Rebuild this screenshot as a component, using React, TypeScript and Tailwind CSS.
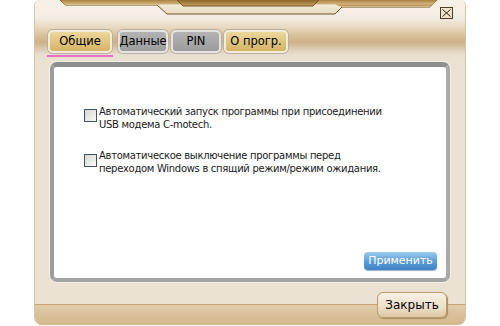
import React from "react";

function Header() {
  return (
    <svg width="430" height="15" viewBox="0 0 430 15" className="block shrink-0">
      <defs>
        <linearGradient id="lightG" x1="0" y1="0" x2="0" y2="1">
          <stop offset="0" stopColor="#f6efe3" />
          <stop offset="1" stopColor="#e9dcc4" />
        </linearGradient>
        <linearGradient id="goldG" x1="0" y1="0" x2="0" y2="1">
          <stop offset="0" stopColor="#a9813f" />
          <stop offset="1" stopColor="#dcc08a" />
        </linearGradient>
        <linearGradient id="darkG" x1="0" y1="0" x2="0" y2="1">
          <stop offset="0" stopColor="#8c6428" />
          <stop offset="1" stopColor="#c9a264" />
        </linearGradient>
      </defs>
      <rect x="0" y="0" width="430" height="15" fill="#f5efe6" />
      <polygon
        points="25,0 30,5 122,5 132,14 300,14 307,7 395,7 402,0"
        fill="url(#lightG)"
      />
      <polyline
        points="25,0 30,5 122,5 132,14 300,14 307,7 395,7 402,0"
        fill="none"
        stroke="#6e5327"
        strokeWidth="1"
      />
      <polygon points="25,0 30,5 122,5 126,4.5 398,4.5 402,0" fill="url(#goldG)" />
      <polygon points="300,4.5 307,7 395,7 398,4.5" fill="url(#goldG)" />
      <polygon points="142,0 148,6 278,6 284,0" fill="url(#darkG)" />
      <polyline points="142,0 148,6 278,6 284,0" fill="none" stroke="#6e5327" strokeWidth="1" />
    </svg>
  );
}

function Tab({
  label,
  active,
  gold,
  w,
  ml,
}: {
  label: string;
  active?: boolean;
  gold?: boolean;
  w: string;
  ml: string;
}) {
  return (
    <div className={`flex flex-col ${ml}`}>
      <div
        className={`${w} h-[23px] rounded-[5px] border-[2px] flex items-center justify-center whitespace-nowrap text-[11.5px] text-black shadow-[0_0_0_1px_#b9b0a2] ${
          gold
            ? "border-[#f3ecd9] bg-[linear-gradient(to_bottom,#ecd69a,#d5b466)]"
            : "border-[#e6e4e0] bg-[linear-gradient(to_bottom,#b3b3b3,#9d9d9d)]"
        }`}
      >
        {label}
      </div>
      {active ? (
        <div className="mt-[2px] h-[2px] -ml-[1px] w-[66px] bg-[#e46fc4]" />
      ) : (
        <div className="mt-[2px] h-[2px]" />
      )}
    </div>
  );
}

function Checkbox() {
  return (
    <div className="w-[13px] h-[13px] shrink-0 border border-[#3f5269] bg-[linear-gradient(135deg,#d8d8d0,#f8f8f5)]" />
  );
}

export default function App() {
  return (
    <div className="w-[500px] h-[326px] bg-white overflow-hidden font-['DejaVu_Sans',sans-serif]">
      <div className="relative ml-[34px] w-[432px] h-[325px] rounded-t-[6px] rounded-b-[8px] border-x border-[#d4c3a6] overflow-hidden flex flex-col bg-[linear-gradient(to_bottom,#f5efe6_0px,#f3ece2_18px,#e8d9c1_27px,#d9c29b_35px,#cdb088_42px,#dac8ad_48px,#e9dfd1_55px,#ebe2d4_62px,#ebe2d4_100%)]">
        <Header />
        <div className="absolute left-[405px] top-[7px] w-[13px] h-[12px] border border-[#4d3d22] bg-[#efe3c9] flex items-center justify-center">
          <svg width="9" height="8" viewBox="0 0 9 8">
            <path d="M0.5 0.5 L8.5 7.5 M8.5 0.5 L0.5 7.5" stroke="#2b2214" strokeWidth="1" />
          </svg>
        </div>
        <div className="h-[15px] shrink-0" />
        <div className="flex pl-[13px]">
          <Tab label="Общие" gold active w="w-[64px]" ml="ml-0" />
          <Tab label="Данные" w="w-[50px]" ml="ml-[5px]" />
          <Tab label="PIN" w="w-[50px]" ml="ml-[3px]" />
          <Tab label="О прогр." gold w="w-[64px]" ml="ml-[3px]" />
        </div>
        <div className="mt-[5px] ml-[15px] w-[400px] h-[220px] shrink-0 rounded-[7px] border-[4px] border-t-[5px] border-t-[#8e8e8e] border-l-[#9b9b9b] border-r-[#a9a9a9] border-b-[#a3a3a3] bg-white flex flex-col shadow-[0_0_0_1px_#f4eee4]">
          <div className="pt-[38px] pl-[30px] flex flex-col text-[10px] leading-[13px] tracking-[-0.3px] text-[#1a1a1a]">
            <div className="flex items-start">
              <div className="mt-[4px]">
                <Checkbox />
              </div>
              <div className="ml-[2px]">
                <div>Автоматический запуск программы при присоединении</div>
                <div>USB модема C-motech.</div>
              </div>
            </div>
            <div className="flex items-start mt-[18px]">
              <div className="mt-[5px]">
                <Checkbox />
              </div>
              <div className="ml-[2px]">
                <div>Автоматическое выключение программы перед</div>
                <div>переходом Windows в спящий режим/режим ожидания.</div>
              </div>
            </div>
          </div>
          <div className="mt-auto self-end mr-[9px] mb-[8px] w-[73px] h-[18px] rounded-[4px] bg-[linear-gradient(to_bottom,#9ccbee,#5a9bd6_55%,#3f82c6)] shadow-[0_1px_1px_#9ab0c4] flex items-center justify-center text-white text-[11px]">
            Применить
          </div>
        </div>
        <div className="flex-1 bg-[linear-gradient(to_bottom,transparent_22px,#c4a574_22px,#c4a574_23px,#dfcba8_23px,#d3b88d_100%)]">
          <div className="mt-[10px] ml-[342px] w-[70px] h-[26px] rounded-[6px] border border-[#b89a6c] bg-[linear-gradient(to_bottom,#f7f0e4,#ecdfc9_60%,#dcc7a2)] shadow-[1px_1px_1px_#a88a5c] flex items-center justify-center text-[12px] text-black">
            Закрыть
          </div>
        </div>
      </div>
    </div>
  );
}
